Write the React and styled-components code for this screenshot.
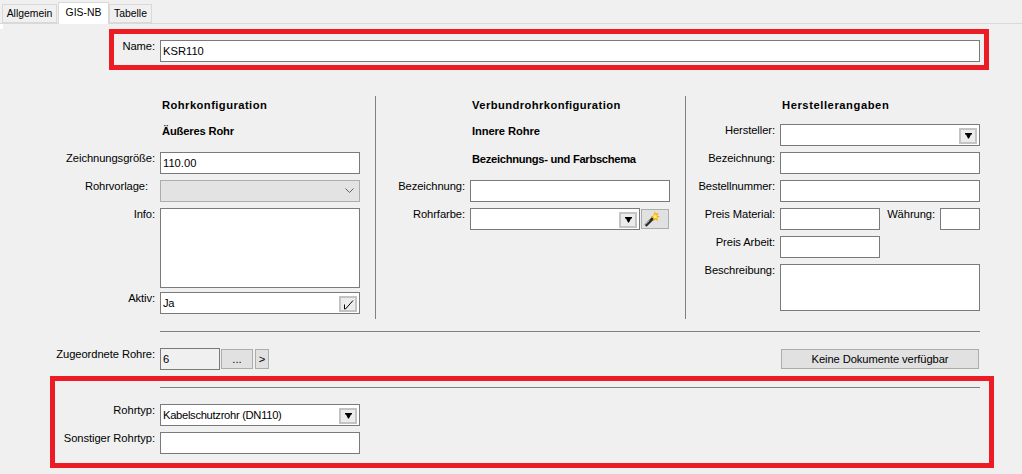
import React from "react";
import styled, { createGlobalStyle } from "styled-components";

const Global = createGlobalStyle`
  html, body {
    margin: 0;
    padding: 0;
    background: #f0f0f0;
  }
  * {
    box-sizing: border-box;
  }
`;

const Page = styled.div`
  width: 1022px;
  height: 474px;
  overflow: hidden;
  background: #f0f0f0;
  color: #000;
  font-family: "Liberation Sans", Arial, sans-serif;
  font-size: 11.2px;
`;

const TabBar = styled.div`
  display: flex;
  align-items: flex-end;
  height: 24px;
  padding-left: 2px;
  border-bottom: 1px solid #d9d9d9;
  font-size: 10.4px;
`;

const Tab = styled.div`
  display: flex;
  align-items: center;
  justify-content: center;
  width: ${(p) => p.$width}px;
  height: ${(p) => (p.$active ? 22 : 19)}px;
  margin-bottom: ${(p) => (p.$active ? -1 : 0)}px;
  background: ${(p) => (p.$active ? "#fff" : "#f0f0f0")};
  border: 1px solid #d9d9d9;
  border-bottom: ${(p) => (p.$active ? "none" : "1px solid #d9d9d9")};
  margin-left: ${(p) => p.$left || 0}px;
  padding-bottom: ${(p) => (p.$active ? 3 : 0)}px;
`;

const TabCorner = styled.div`
  width: 3px;
  height: 5px;
  background: #fff;
`;

const RedBox = styled.div`
  border: 5px solid #ed1c24;
  margin-left: ${(p) => p.$left}px;
  margin-top: ${(p) => p.$top || 0}px;
  width: ${(p) => p.$width}px;
  height: ${(p) => p.$height}px;
  padding-top: ${(p) => p.$padTop}px;
`;

const Field = styled.div`
  display: flex;
  gap: 5px;
  margin-top: ${(p) => p.$top ?? 6}px;
`;

const Label = styled.div`
  width: ${(p) => p.$width}px;
  flex: none;
  text-align: right;
  line-height: 13px;
  letter-spacing: -0.08px;
  white-space: nowrap;
  padding-right: ${(p) => p.$inset || 0}px;
`;

const Input = styled.input`
  display: block;
  width: ${(p) => p.$width}px;
  height: ${(p) => p.$height || 22}px;
  flex: none;
  padding: 0 2px;
  margin: 0;
  border: 1px solid #7a7a7a;
  border-radius: 0;
  outline: none;
  background: ${(p) => p.$bg || "#fff"};
  color: #000;
  font: inherit;
`;

const Area = styled.textarea`
  display: block;
  width: ${(p) => p.$width}px;
  height: ${(p) => p.$height}px;
  flex: none;
  margin: 0;
  padding: 2px;
  border: 1px solid #7a7a7a;
  border-radius: 0;
  outline: none;
  resize: none;
  overflow: hidden;
  background: #fff;
  font: inherit;
`;

const Combo = styled.div`
  display: flex;
  align-items: center;
  justify-content: space-between;
  width: ${(p) => p.$width}px;
  height: 22px;
  flex: none;
  padding: 0 2px;
  background: ${(p) => (p.$disabled ? "#e3e3e3" : "#fff")};
  border: 1px solid ${(p) => (p.$disabled ? "#adadad" : "#7a7a7a")};
  letter-spacing: -0.3px;
`;

const ComboButton = styled.div`
  display: flex;
  align-items: center;
  justify-content: center;
  align-self: flex-end;
  width: 18px;
  height: 16px;
  flex: none;
  margin-bottom: 1px;
  background: #ececec;
  border: 2px solid #c4c4c4;
`;

const Chevron = styled.svg`
  margin-right: 3px;
`;

const Columns = styled.div`
  display: flex;
  height: 223px;
  margin-top: 26px;
`;

const Column = styled.div`
  width: ${(p) => p.$width}px;
  flex: none;
  border-right: ${(p) => (p.$last ? "none" : "1px solid #808080")};
`;

const Heading = styled.div`
  height: 18px;
  margin-top: ${(p) => p.$top || 0}px;
  padding-left: ${(p) => p.$left}px;
  font-weight: bold;
  line-height: 18px;
  letter-spacing: ${(p) => p.$spacing ?? 0.45}px;
  white-space: nowrap;
`;

const Rule = styled.div`
  height: 1px;
  background: #808080;
  margin-left: ${(p) => p.$left}px;
  width: 820px;
  margin-top: ${(p) => p.$top}px;
`;

const ButtonRow = styled.div`
  display: flex;
  align-items: center;
  width: 979px;
  margin-top: 16px;
`;

const RowLabel = styled(Label)`
  align-self: flex-start;
  margin-right: 5px;
`;

const Button = styled.button`
  display: flex;
  align-items: center;
  justify-content: center;
  width: ${(p) => p.$width}px;
  height: ${(p) => p.$height || 20}px;
  flex: none;
  margin: 0 0 0 ${(p) => p.$left ?? 1}px;
  padding: 0;
  background: #e1e1e1;
  border: 1px solid #adadad;
  border-radius: 0;
  color: #000;
  font: inherit;
`;

const WandButton = styled(Button)`
  justify-content: flex-start;
  margin-top: 1px;
  padding-left: 2px;
`;

const DocsButton = styled(Button)`
  margin-left: auto;
  letter-spacing: -0.1px;
`;

const DownArrow = () => (
  <svg width="7" height="6" viewBox="0 0 7 6">
    <path d="M0 0h7v1.500H6L4 5.500H3L1 1.500H0z" fill="#000" />
  </svg>
);

const CheckMark = () => (
  <svg width="12" height="11" viewBox="0 0 12 11" fill="none">
    <path d="M2.500 5.500v4.500h1L11 1.500" stroke="#000" strokeWidth="1" />
  </svg>
);

const Wand = () => (
  <svg width="16" height="16" viewBox="0 0 17 17">
    <path d="M0.500 14.500 8.500 6.500l2.200 2.200-8 8z" fill="#2b2b2b" />
    <path d="M1.500 14.500 6 10" stroke="#b5b5b5" strokeWidth="1" />
    <path
      d="M11.500 0l1 3 3-1.200-1.300 3 2.800 1.200-3 1.300 1 3.200-3.100-1.500-2 2.200.1-3.500L7 6l3-1.200z"
      fill="#f4b400"
    />
    <path d="M11.500 3.200l1 1.500 1.700.1-1 1.400.7 1.700-1.800-.6-1.500 1 .1-1.800-1.400-1.100 1.800-.5z" fill="#fff09a" />
  </svg>
);

function App() {
  return (
    <Page>
      <Global />
      <TabBar>
        <Tab $width={55}>Allgemein</Tab>
        <Tab $width={51} $active $left={1}>
          GIS-NB
        </Tab>
        <Tab $width={43}>Tabelle</Tab>
      </TabBar>
      <TabCorner />

      <RedBox $left={109} $width={880} $height={41} $padTop={6}>
        <Field $top={0}>
          <Label $width={41}>Name:</Label>
          <Input $width={820} defaultValue="KSR110" />
        </Field>
      </RedBox>

      <Columns>
        <Column $width={376}>
          <Heading $left={162}>Rohrkonfiguration</Heading>
          <Heading $left={162} $top={8} $spacing={-0.17}>
            Äußeres Rohr
          </Heading>
          <Field $top={12}>
            <Label $width={155}>Zeichnungsgröße:</Label>
            <Input $width={200} defaultValue="110.00" />
          </Field>
          <Field>
            <Label $width={155} $inset={7}>
              Rohrvorlage:
            </Label>
            <Combo $width={200} $disabled>
              <span />
              <Chevron width="9" height="6" viewBox="0 0 9 6" fill="none">
                <path d="M.5 .5 4.500 4.500 8.500 .5" stroke="#606060" strokeWidth="1" />
              </Chevron>
            </Combo>
          </Field>
          <Field>
            <Label $width={155}>Info:</Label>
            <Area $width={200} $height={80} />
          </Field>
          <Field $top={4}>
            <Label $width={155}>Aktiv:</Label>
            <Combo $width={200}>
              Ja
              <ComboButton>
                <CheckMark />
              </ComboButton>
            </Combo>
          </Field>
        </Column>

        <Column $width={310}>
          <Heading $left={96} $spacing={0.42}>
            Verbundrohrkonfiguration
          </Heading>
          <Heading $left={96} $top={8} $spacing={-0.1}>
            Innere Rohre
          </Heading>
          <Heading $left={96} $top={10} $spacing={-0.3}>
            Bezeichnungs- und Farbschema
          </Heading>
          <Field $top={12}>
            <Label $width={89}>Bezeichnung:</Label>
            <Input $width={200} />
          </Field>
          <Field>
            <Label $width={89}>Rohrfarbe:</Label>
            <Combo $width={170}>
              <span />
              <ComboButton>
                <DownArrow />
              </ComboButton>
            </Combo>
            <WandButton $width={28} $left={-4}>
              <Wand />
            </WandButton>
          </Field>
        </Column>

        <Column $width={336} $last>
          <Heading $left={96} $spacing={0.57}>
            Herstellerangaben
          </Heading>
          <Field $top={10}>
            <Label $width={89}>Hersteller:</Label>
            <Combo $width={200}>
              <span />
              <ComboButton>
                <DownArrow />
              </ComboButton>
            </Combo>
          </Field>
          <Field>
            <Label $width={89}>Bezeichnung:</Label>
            <Input $width={200} />
          </Field>
          <Field>
            <Label $width={89}>Bestellnummer:</Label>
            <Input $width={200} />
          </Field>
          <Field>
            <Label $width={89}>Preis Material:</Label>
            <Input $width={100} />
            <Label $width={50}>Währung:</Label>
            <Input $width={40} />
          </Field>
          <Field>
            <Label $width={89}>Preis Arbeit:</Label>
            <Input $width={100} />
          </Field>
          <Field>
            <Label $width={89}>Beschreibung:</Label>
            <Area $width={200} $height={47} />
          </Field>
        </Column>
      </Columns>

      <Rule $left={160} $top={12} />

      <ButtonRow>
        <RowLabel $width={155}>Zugeordnete Rohre:</RowLabel>
        <Input $width={60} $bg="#f0f0f0" defaultValue="6" />
        <Button $width={32}>...</Button>
        <Button $width={14} $left={2}>
          &gt;
        </Button>
        <DocsButton $width={198}>Keine Dokumente verfügbar</DocsButton>
      </ButtonRow>

      <RedBox $left={50} $top={6} $width={944} $height={92} $padTop={6}>
        <Rule $left={105} $top={0} />
        <Field $top={16}>
          <Label $width={100}>Rohrtyp:</Label>
          <Combo $width={200}>
            Kabelschutzrohr (DN110)
            <ComboButton>
              <DownArrow />
            </ComboButton>
          </Combo>
        </Field>
        <Field>
          <Label $width={100}>Sonstiger Rohrtyp:</Label>
          <Input $width={200} />
        </Field>
      </RedBox>
    </Page>
  );
}

export default App;
